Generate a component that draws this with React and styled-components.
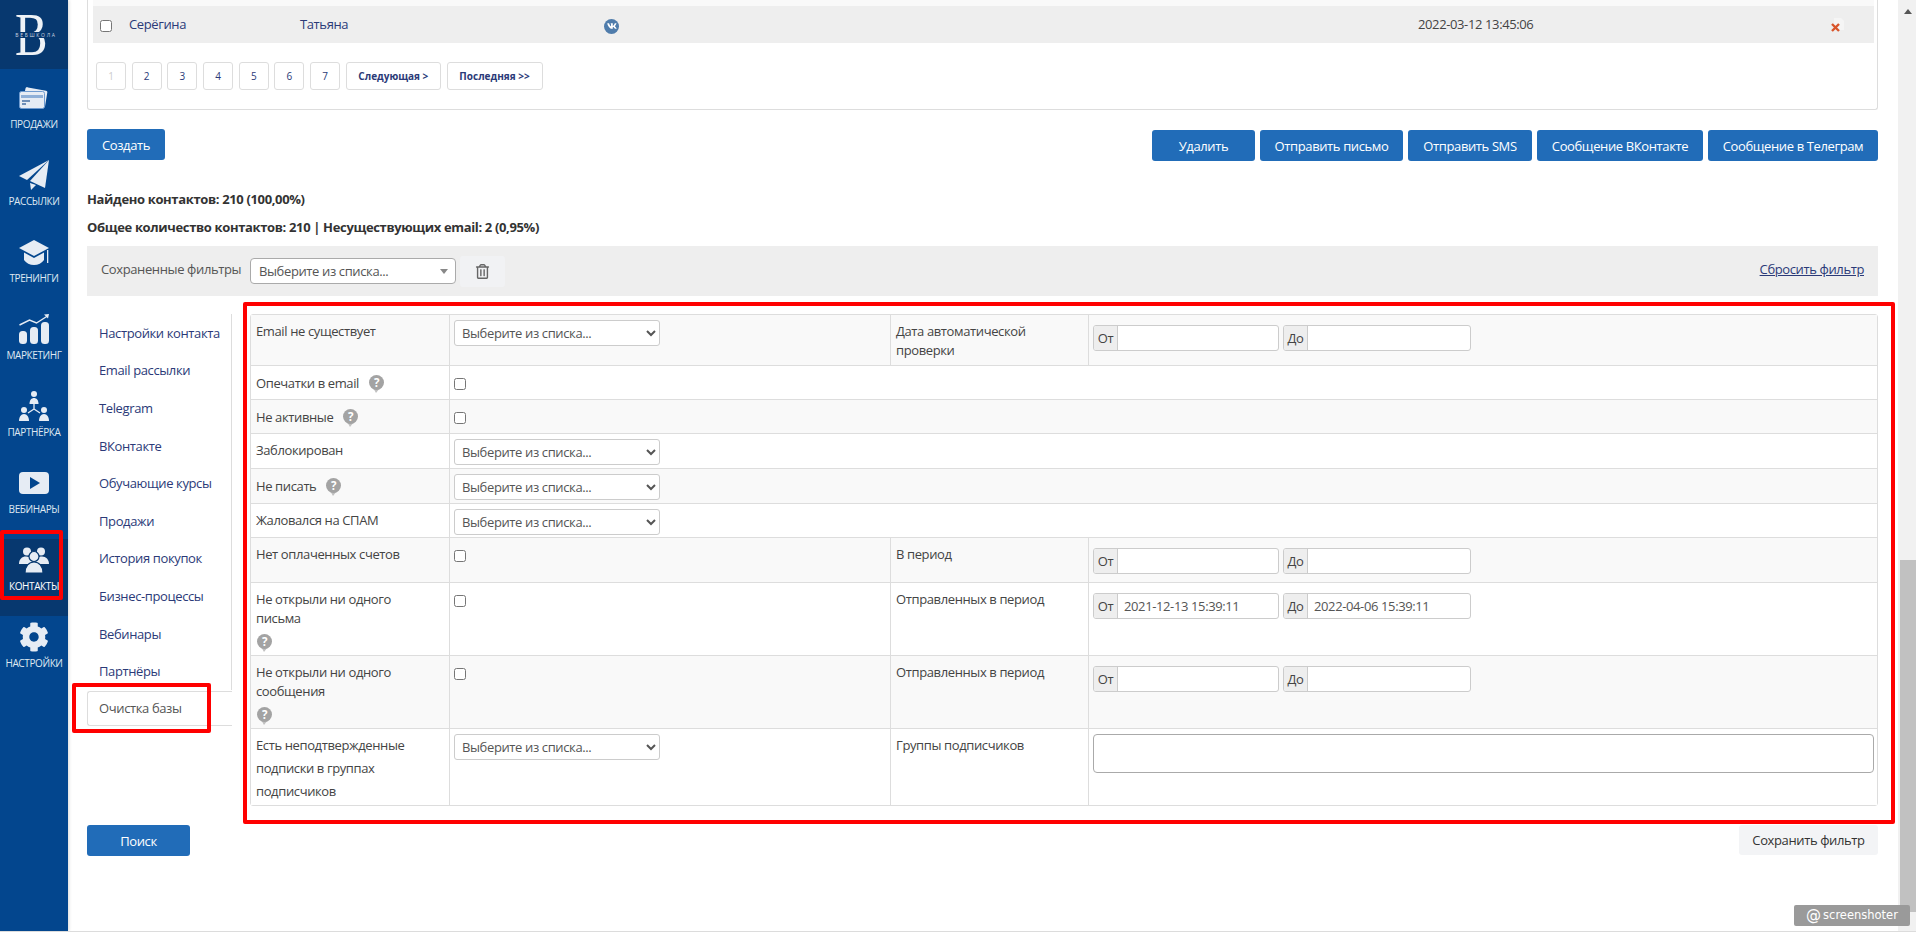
import React from "react";
import styled, { createGlobalStyle } from "styled-components";
import { FaCog, FaRegTrashAlt, FaVk } from "react-icons/fa";

const GlobalStyle = createGlobalStyle`
  * { box-sizing: border-box; }
  html, body { margin: 0; padding: 0; height: 100%; overflow: hidden; background: #fff; }
  body { font-family: "Open Sans", "Liberation Sans", sans-serif; font-size: 13px; color: #444; letter-spacing: -0.38px; }
  button, select { letter-spacing: inherit; }
`;

const Page = styled.div`
  position: relative;
  display: flex;
  height: 932px;
  overflow: hidden;
  border-bottom: 1px solid #dcdcdc;
`;

const Sidebar = styled.aside`
  width: 68px;
  flex: none;
  background: #03468e;
  box-shadow: 1px 0 3px rgba(0, 0, 0, 0.15);
`;

const LogoBox = styled.div`
  position: relative;
  height: 69px;
  background: #07386f;
  display: flex;
  align-items: center;
  justify-content: center;
  overflow: hidden;
`;

const LogoLetter = styled.span`
  margin-left: -5px;
  font-family: "Liberation Serif", serif;
  font-size: 61px;
  line-height: 69px;
  color: #eef2f6;
  transform: scaleX(0.8);
`;

const LogoBand = styled.span`
  position: absolute;
  left: 10px;
  right: 6px;
  top: 32px;
  height: 6px;
  background: #07386f;
  color: #c9d4e0;
  font-size: 5px;
  line-height: 6px;
  letter-spacing: 1.7px;
  text-align: center;
  white-space: nowrap;
`;

const NavList = styled.nav`
  display: flex;
  flex-direction: column;
  padding-top: 8px;
`;

const NavItem = styled.a`
  height: 77px;
  padding-top: 6px;
  display: flex;
  flex-direction: column;
  align-items: center;
  gap: 4px;
  background: ${(p) => (p.$active ? "#07386f" : "transparent")};
  color: ${(p) => (p.$active ? "#fff" : "#dfe8f2")};
  font-size: 10px;
  line-height: 14px;
  text-transform: uppercase;
  white-space: nowrap;
`;

const NavIcon = styled.span`
  height: 30px;
  display: flex;
  align-items: center;
  justify-content: center;
  color: #e6ecf4;
`;

const Main = styled.main`
  flex: 1;
  min-width: 0;
  padding: 0 20px 0 19px;
  display: flex;
  flex-direction: column;
`;

const ResultCard = styled.section`
  height: 110px;
  margin-bottom: 19px;
  padding: 0 3px 0 5px;
  border: 1px solid #ddd;
  border-top: 0;
  border-radius: 0 0 3px 3px;
`;

const TopStrip = styled.div`
  height: 6px;
  background: #f9f9f9;
`;

const ContactRow = styled.div`
  display: grid;
  grid-template-columns: 36px 171px 304px 814px 413px 1fr;
  align-items: center;
  height: 37px;
  background: #eee;
`;

const RowCheck = styled.input.attrs({ type: "checkbox" })`
  width: 12px;
  height: 12px;
  margin: 3px 0 0 7px;
`;

const RowName = styled.span`
  color: #2b3a78;
  margin-top: -2px;
`;

const RowDate = styled.span`
  margin-top: -2px;
  color: #444;
`;

const VkBadge = styled.span`
  width: 15px;
  height: 15px;
  border-radius: 50%;
  background: #4f7cab;
  color: #fff;
  display: flex;
  align-items: center;
  justify-content: center;
  margin-top: 3px;
`;

const Pager = styled.div`
  display: flex;
  gap: 5.7px;
  margin: 19px 0 0 3px;
`;

const PageLink = styled.a`
  height: 28px;
  width: ${(p) => p.$w || 30}px;
  border: 1px solid #ddd;
  border-radius: 3px;
  display: flex;
  align-items: center;
  justify-content: center;
  color: ${(p) => (p.$off ? "#ccc" : "#2b3a78")};
  font-size: 10px;
  font-weight: ${(p) => (p.$w ? 700 : 400)};
  letter-spacing: 0;
  white-space: nowrap;
`;

const ActionBar = styled.div`
  display: flex;
  justify-content: space-between;
  align-items: flex-start;
  height: 31px;
`;

const ActionGroup = styled.div`
  display: flex;
  gap: 5px;
  margin-top: 1px;
`;

const BlueButton = styled.button`
  height: 31px;
  width: ${(p) => p.$w}px;
  padding: 0;
  background: #216cb8;
  border: 0;
  border-radius: 3px;
  color: #fff;
  font: 13px "Open Sans", sans-serif;
  white-space: nowrap;
`;

const Stats = styled.div`
  margin-top: 30px;
  height: 56px;
  display: flex;
  flex-direction: column;
  gap: 10px;
  font-weight: 700;
  color: #333;
  line-height: 18px;
  letter-spacing: -0.35px;
`;

const SavedBar = styled.div`
  height: 50px;
  padding: 0 14px;
  background: #eee;
  display: flex;
  align-items: center;
`;

const SavedLabel = styled.span`
  width: 149px;
  margin-top: -4px;
  color: #555;
  white-space: nowrap;
`;

const FakeSelect = styled.div`
  width: 206px;
  height: 26px;
  padding: 0 8px;
  background: #fff;
  border: 1px solid #aaa;
  border-radius: 4px;
  display: flex;
  align-items: center;
  justify-content: space-between;
  color: #555;
  font-size: 13px;
  &::after {
    content: "";
    border: 4px solid transparent;
    border-top: 5px solid #888;
    border-bottom: 0;
    margin-right: -1px;
  }
`;

const TrashButton = styled.button`
  width: 45px;
  height: 31px;
  margin-left: 4px;
  border: 0;
  border-radius: 3px;
  background: #f1f2f4;
  color: #666;
  display: flex;
  align-items: center;
  justify-content: center;
`;

const ResetLink = styled.a`
  margin-left: auto;
  margin-top: -4px;
  color: #2b3a78;
  text-decoration: underline;
`;

const FilterArea = styled.div`
  margin-top: 18px;
  display: flex;
  height: 490px;
`;

const TabList = styled.ul`
  list-style: none;
  margin: 0;
  padding: 0;
  width: 163px;
  flex: none;
`;

const Tab = styled.li`
  height: 37.6px;
  width: 145px;
  padding-left: 12px;
  display: flex;
  align-items: center;
  color: #2b3a78;
  white-space: nowrap;
  border-right: 1px solid #ddd;
`;

const ActiveTab = styled.li`
  height: 35px;
  margin-top: 1px;
  width: 145px;
  padding-left: 11px;
  display: flex;
  align-items: center;
  color: #555;
  border: 1px solid #ddd;
  border-right: 0;
  border-radius: 3px 0 0 3px;
  background: #fff;
`;

const FilterTable = styled.table`
  width: 1628px;
  height: 490px;
  table-layout: fixed;
  border-collapse: separate;
  border-spacing: 0;
  border: 1px solid #ddd;
  border-radius: 3px;
  margin: 0;
`;

const Row = styled.tr`
  height: ${(p) => p.$h}px;
  background: ${(p) => (p.$alt ? "#f9f9f9" : "#fff")};
  &:not(:last-child) td { border-bottom: 1px solid #ddd; }
`;

const Cell = styled.td`
  padding: ${(p) => (p.$field ? "5px 4px 0" : p.$lh ? "5px 20px 0 5px" : "7px 20px 0 5px")};
  vertical-align: top;
  line-height: ${(p) => p.$lh || 19}px;
  color: #444;
  &:not(:last-child) { border-right: 1px solid #ddd; }
`;

const LabelRow = styled.div`
  display: flex;
  align-items: center;
  gap: 9px;
  margin-top: 1px;
`;

const HelpBlock = styled.div`
  margin-top: 6px;
  display: flex;
`;

const NativeSelect = styled.select`
  display: block;
  width: 206px;
  height: 26px;
  padding: 0 3px;
  border: 1px solid #ccc;
  border-radius: 3px;
  background-color: #fff;
  color: #555;
  font: 13px "Open Sans", sans-serif;
`;

const CellCheck = styled.input.attrs({ type: "checkbox" })`
  display: block;
  width: 12px;
  height: 12px;
  margin: 7px 0 0 0;
`;

const DatePair = styled.div`
  display: flex;
  gap: 4px;
  margin-top: 5px;
`;

const DateField = styled.div`
  width: 186px;
  height: 26px;
  display: flex;
  border: 1px solid #ccc;
  border-radius: 3px;
  background: #fff;
  overflow: hidden;
  &:last-child { width: 188px; }
`;

const DateAddon = styled.span`
  width: 24px;
  flex: none;
  background: #eee;
  border-right: 1px solid #ccc;
  display: flex;
  align-items: center;
  justify-content: center;
  color: #444;
`;

const DateValue = styled.span`
  padding-left: 6px;
  line-height: 24px;
  color: #555;
  white-space: nowrap;
`;

const GroupsBox = styled.div`
  width: 781px;
  height: 39px;
  border: 1px solid #aaa;
  border-radius: 4px;
  background: #fff;
`;

const BottomBar = styled.div`
  margin-top: 21px;
  display: flex;
  justify-content: space-between;
`;

const SaveButton = styled.button`
  width: 139px;
  height: 30px;
  border: 0;
  border-radius: 3px;
  background: #f3f4f6;
  color: #333;
  font: 13px "Open Sans", sans-serif;
`;

const Scrollbar = styled.div`
  width: 18px;
  flex: none;
  background: #f1f1f1;
  display: flex;
  flex-direction: column;
  align-items: flex-end;
`;

const ScrollArrow = styled.span`
  width: 0;
  margin: 9px 4px 0 0;
  border: 4px solid transparent;
  border-bottom: 5px solid #555;
  border-top: 0;
`;

const ScrollThumb = styled.div`
  width: 16px;
  margin-top: 546px;
  height: 352px;
  background: #c1c1c1;
`;

const Highlight = styled.div`
  position: absolute;
  left: ${(p) => p.$x}px;
  top: ${(p) => p.$y}px;
  width: ${(p) => p.$w}px;
  height: ${(p) => p.$h}px;
  border: 4px solid #f00;
  border-radius: 2px;
  pointer-events: none;
`;

const Watermark = styled.div`
  position: absolute;
  left: 1794px;
  top: 905px;
  width: 116px;
  height: 21px;
  border-radius: 2px;
  background: #9a9a9a;
  color: #fff;
  font: 11.5px/21px "DejaVu Sans", sans-serif;
  letter-spacing: 0;
  display: flex;
  align-items: center;
  justify-content: center;
  gap: 2px;
`;

const WatermarkAt = styled.span`
  font-size: 15px;
`;

const CardIcon = () => (
  <svg width="30" height="22" viewBox="0 0 30 22">
    <path d="M9 0.5l18 3.2a1.5 1.5 0 0 1 1.3 1.8l-2.3 14h-2V6H5.5l1-4.5A1.5 1.5 0 0 1 9 0.5z" fill="#e6ecf4" />
    <rect x="0.5" y="4.5" width="25" height="17" rx="2" fill="#e6ecf4" stroke="#6f9bd0" />
    <rect x="2" y="8" width="22" height="3" fill="#8fb0d8" />
    <rect x="3" y="13" width="8" height="2" fill="#6f8fb8" />
    <rect x="3" y="16" width="4" height="2" fill="#6f8fb8" />
  </svg>
);

const PlaneIcon = () => (
  <svg width="30" height="30" viewBox="0 0 30 30">
    <path d="M30 0L0 16l8 4z" fill="#e6ecf4" />
    <path d="M30 0L11 21l15 7z" fill="#e6ecf4" />
    <path d="M11 23l1 7 5-5z" fill="#e6ecf4" />
  </svg>
);

const CapIcon = () => (
  <svg width="30" height="25" viewBox="0 0 30 25">
    <path d="M15 0L30 8 15 16 0 8z" fill="#e6ecf4" />
    <path d="M5 12.5l10 5.5 10-5.5V20c-2 3-6 5-10 5s-8-2-10-5z" fill="#e6ecf4" />
    <rect x="28" y="10" width="1.3" height="13" fill="#e6ecf4" />
  </svg>
);

const TrendIcon = () => (
  <svg width="30" height="30" viewBox="0 0 30 30">
    <path d="M0.5 11l10-5 7 3 11-7" fill="none" stroke="#e6ecf4" strokeWidth="1.4" />
    <path d="M25 0.5L30 0l-1 4.5z" fill="#e6ecf4" />
    <rect x="0" y="17" width="8" height="13" rx="3.5" fill="#e6ecf4" />
    <rect x="11" y="13" width="8" height="17" rx="3.5" fill="#e6ecf4" />
    <rect x="22" y="8" width="8" height="22" rx="3.5" fill="#e6ecf4" />
  </svg>
);

const PartnerIcon = () => (
  <svg width="30" height="30" viewBox="0 0 30 30">
    <circle cx="15" cy="3" r="3" fill="#e6ecf4" />
    <path d="M10.5 13c0-4 2-6 4.5-6s4.5 2 4.5 6z" fill="#e6ecf4" />
    <path d="M15 13v5M15 18l-6 4M15 18l6 4" stroke="#e6ecf4" strokeWidth="1.3" fill="none" />
    <circle cx="5" cy="19" r="3" fill="#e6ecf4" />
    <path d="M0 30c0-4 2-7 5-7s5 3 5 7z" fill="#e6ecf4" />
    <circle cx="25" cy="19" r="3" fill="#e6ecf4" />
    <path d="M20 30c0-4 2-7 5-7s5 3 5 7z" fill="#e6ecf4" />
  </svg>
);

const PlayIcon = () => (
  <svg width="30" height="22" viewBox="0 0 30 22">
    <rect width="30" height="22" rx="4" fill="#e6ecf4" />
    <path d="M11 5l10 6-10 6z" fill="#03468e" />
  </svg>
);

const PeopleIcon = () => (
  <svg width="30" height="26" viewBox="0 0 30 26">
    <circle cx="8" cy="4.5" r="4" fill="#e6ecf4" />
    <circle cx="22" cy="4.5" r="4" fill="#e6ecf4" />
    <path d="M0 17c0-5 3-7.500 7-7.500s7 3 7 7.500z" fill="#e6ecf4" />
    <path d="M16 17c0-5 3-7.500 7-7.500s7 3 7 7.500z" fill="#e6ecf4" />
    <circle cx="15" cy="9.5" r="5" fill="#e6ecf4" stroke="#07386f" strokeWidth="1.2" />
    <path d="M6 26c0-7 4-11 9-11s9 4 9 11z" fill="#e6ecf4" stroke="#07386f" strokeWidth="1.2" />
  </svg>
);

const HelpIcon = () => (
  <svg width="17" height="18" viewBox="0 0 17 18">
    <path d="M5.5 13.5h6L8 18z" fill="#c0c0c0" />
    <circle cx="8.5" cy="7.5" r="7.5" fill="#a3a3a3" />
    <text x="8.5" y="11.5" textAnchor="middle" fontSize="11.5" fontWeight="700" fill="#fff" fontFamily="Open Sans">?</text>
  </svg>
);

const DeleteIcon = () => (
  <svg width="14" height="16" viewBox="0 0 14 16">
    <path d="M3 1h7l3 3v9H3z" fill="#f5f5f5" />
    <path d="M1 8l7 7M8 8l-7 7" stroke="#d9552b" strokeWidth="2.4" transform="translate(0 -1)" />
  </svg>
);

const navItems = [
  { label: "Продажи", icon: <CardIcon /> },
  { label: "Рассылки", icon: <PlaneIcon /> },
  { label: "Тренинги", icon: <CapIcon /> },
  { label: "Маркетинг", icon: <TrendIcon /> },
  { label: "Партнёрка", icon: <PartnerIcon /> },
  { label: "Вебинары", icon: <PlayIcon /> },
  { label: "Контакты", icon: <PeopleIcon />, active: true },
  { label: "Настройки", icon: <FaCog size={30} /> },
];

const tabs = [
  "Настройки контакта",
  "Email рассылки",
  "Telegram",
  "ВКонтакте",
  "Обучающие курсы",
  "Продажи",
  "История покупок",
  "Бизнес-процессы",
  "Вебинары",
  "Партнёры",
];

const ListSelect = () => (
  <NativeSelect defaultValue="">
    <option value="">Выберите из списка...</option>
  </NativeSelect>
);

const Dates = ({ from, to }) => (
  <DatePair>
    <DateField>
      <DateAddon>От</DateAddon>
      <DateValue>{from}</DateValue>
    </DateField>
    <DateField>
      <DateAddon>До</DateAddon>
      <DateValue>{to}</DateValue>
    </DateField>
  </DatePair>
);

export default function App() {
  return (
    <>
      <GlobalStyle />
      <Page>
        <Sidebar>
          <LogoBox>
            <LogoLetter>B</LogoLetter>
            <LogoBand>ВЕБШКОЛА</LogoBand>
          </LogoBox>
          <NavList>
            {navItems.map((item) => (
              <NavItem key={item.label} $active={item.active}>
                <NavIcon>{item.icon}</NavIcon>
                {item.label}
              </NavItem>
            ))}
          </NavList>
        </Sidebar>

        <Main>
          <ResultCard>
            <TopStrip />
            <ContactRow>
              <RowCheck />
              <RowName>Серёгина</RowName>
              <RowName>Татьяна</RowName>
              <VkBadge>
                <FaVk size={10} />
              </VkBadge>
              <RowDate>2022-03-12 13:45:06</RowDate>
              <DeleteIcon />
            </ContactRow>
            <Pager>
              <PageLink $off>1</PageLink>
              {[2, 3, 4, 5, 6, 7].map((n) => (
                <PageLink key={n}>{n}</PageLink>
              ))}
              <PageLink $w={95}>Следующая &gt;</PageLink>
              <PageLink $w={96}>Последняя &gt;&gt;</PageLink>
            </Pager>
          </ResultCard>

          <ActionBar>
            <BlueButton $w={78}>Создать</BlueButton>
            <ActionGroup>
              <BlueButton $w={103}>Удалить</BlueButton>
              <BlueButton $w={143}>Отправить письмо</BlueButton>
              <BlueButton $w={124}>Отправить SMS</BlueButton>
              <BlueButton $w={166}>Сообщение ВКонтакте</BlueButton>
              <BlueButton $w={170}>Сообщение в Телеграм</BlueButton>
            </ActionGroup>
          </ActionBar>

          <Stats>
            <span>Найдено контактов: 210 (100,00%)</span>
            <span>Общее количество контактов: 210 | Несуществующих email: 2 (0,95%)</span>
          </Stats>

          <SavedBar>
            <SavedLabel>Сохраненные фильтры</SavedLabel>
            <FakeSelect>Выберите из списка...</FakeSelect>
            <TrashButton>
              <FaRegTrashAlt size={15} />
            </TrashButton>
            <ResetLink>Сбросить фильтр</ResetLink>
          </SavedBar>

          <FilterArea>
            <TabList>
              {tabs.map((t) => (
                <Tab key={t}>{t}</Tab>
              ))}
              <ActiveTab>Очистка базы</ActiveTab>
            </TabList>
            <FilterTable>
              <colgroup>
                <col width="199" />
                <col width="441" />
                <col width="198" />
                <col />
              </colgroup>
              <tbody>
                <Row $h={51} $alt>
                  <Cell>Email не существует</Cell>
                  <Cell $field><ListSelect /></Cell>
                  <Cell>Дата автоматической проверки</Cell>
                  <Cell $field><Dates /></Cell>
                </Row>
                <Row $h={34}>
                  <Cell>
                    <LabelRow>Опечатки в email <HelpIcon /></LabelRow>
                  </Cell>
                  <Cell $field colSpan={3}><CellCheck /></Cell>
                </Row>
                <Row $h={34} $alt>
                  <Cell>
                    <LabelRow>Не активные <HelpIcon /></LabelRow>
                  </Cell>
                  <Cell $field colSpan={3}><CellCheck /></Cell>
                </Row>
                <Row $h={35}>
                  <Cell>Заблокирован</Cell>
                  <Cell $field colSpan={3}><ListSelect /></Cell>
                </Row>
                <Row $h={35} $alt>
                  <Cell>
                    <LabelRow>Не писать <HelpIcon /></LabelRow>
                  </Cell>
                  <Cell $field colSpan={3}><ListSelect /></Cell>
                </Row>
                <Row $h={34}>
                  <Cell>Жаловался на СПАМ</Cell>
                  <Cell $field colSpan={3}><ListSelect /></Cell>
                </Row>
                <Row $h={45} $alt>
                  <Cell>Нет оплаченных счетов</Cell>
                  <Cell $field><CellCheck /></Cell>
                  <Cell>В период</Cell>
                  <Cell $field><Dates /></Cell>
                </Row>
                <Row $h={73}>
                  <Cell>
                    Не открыли ни одного письма
                    <HelpBlock><HelpIcon /></HelpBlock>
                  </Cell>
                  <Cell $field><CellCheck /></Cell>
                  <Cell>Отправленных в период</Cell>
                  <Cell $field>
                    <Dates from="2021-12-13 15:39:11" to="2022-04-06 15:39:11" />
                  </Cell>
                </Row>
                <Row $h={73} $alt>
                  <Cell>
                    Не открыли ни одного сообщения
                    <HelpBlock><HelpIcon /></HelpBlock>
                  </Cell>
                  <Cell $field><CellCheck /></Cell>
                  <Cell>Отправленных в период</Cell>
                  <Cell $field><Dates /></Cell>
                </Row>
                <Row $h={76}>
                  <Cell $lh={23}>Есть неподтвержденные подписки в группах подписчиков</Cell>
                  <Cell $field><ListSelect /></Cell>
                  <Cell>Группы подписчиков</Cell>
                  <Cell $field><GroupsBox /></Cell>
                </Row>
              </tbody>
            </FilterTable>
          </FilterArea>

          <BottomBar>
            <BlueButton $w={103}>Поиск</BlueButton>
            <SaveButton>Сохранить фильтр</SaveButton>
          </BottomBar>
        </Main>

        <Scrollbar>
          <ScrollArrow />
          <ScrollThumb />
        </Scrollbar>

        <Highlight $x={0} $y={530} $w={63} $h={70} />
        <Highlight $x={72} $y={683} $w={139} $h={50} />
        <Highlight $x={243} $y={302} $w={1652} $h={522} />
        <Watermark>
          <WatermarkAt>@</WatermarkAt>
          screenshoter
        </Watermark>
      </Page>
    </>
  );
}
